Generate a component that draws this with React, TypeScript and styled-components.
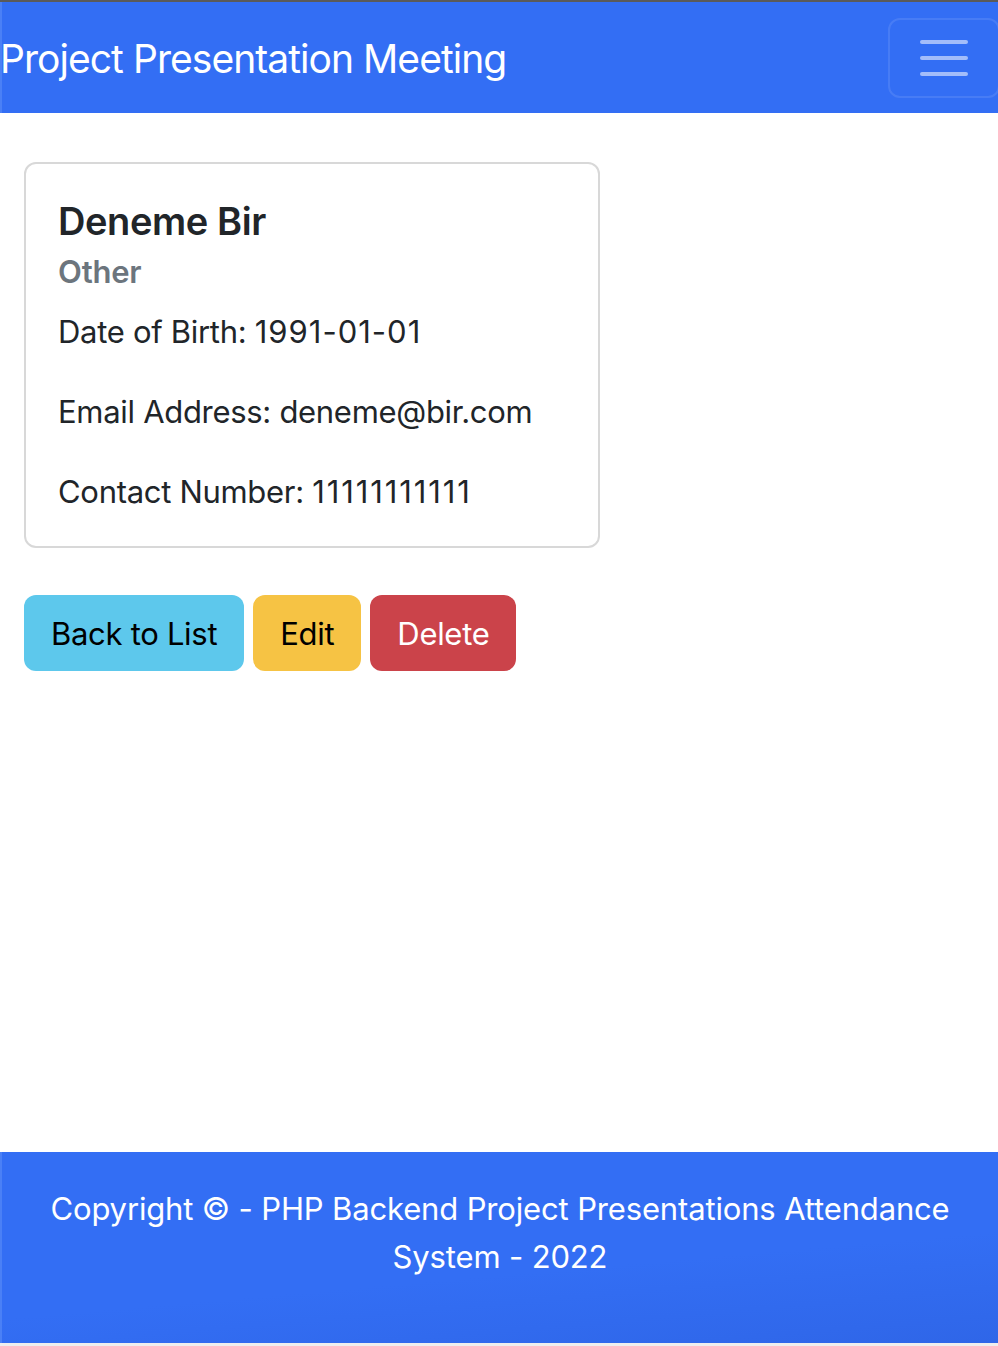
import React from 'react'
import styled, { createGlobalStyle } from 'styled-components'

const GlobalStyle = createGlobalStyle`
  html, body {
    margin: 0;
    padding: 0;
    background: #eeeeee;
  }
  body {
    font-family: Inter, "Noto Sans", "Liberation Sans", sans-serif;
    color: #212529;
  }
  * {
    box-sizing: border-box;
  }
`

const Shell = styled.div`
  display: flex;
  flex-direction: column;
  min-height: 1343px;
  background: #ffffff;
  border-top: 2px solid #5a5a5a;
`

const Navbar = styled.nav`
  display: flex;
  align-items: center;
  justify-content: space-between;
  height: 111px;
  background: #336ef4;
  border-left: 2px solid #4a80f6;
`

const Brand = styled.a`
  font-size: 39px;
  line-height: 56px;
  padding-top: 3px;
  color: #ffffff;
  text-decoration: none;
  margin-left: -2px;
  letter-spacing: -0.95px;
`

const Toggler = styled.button`
  display: flex;
  flex-direction: column;
  justify-content: center;
  align-items: center;
  gap: 12px;
  width: 112px;
  height: 80px;
  margin-right: -2px;
  background: transparent;
  border: 2px solid rgba(255, 255, 255, 0.1);
  border-radius: 12px;
  padding: 0;
`

const TogglerBar = styled.span`
  display: block;
  width: 48px;
  height: 4px;
  border-radius: 2px;
  background: rgba(255, 255, 255, 0.55);
`

const Main = styled.main`
  flex: 1;
  padding: 49px 24px;
`

const Card = styled.div`
  width: 576px;
  border: 2px solid #d8d8d8;
  border-radius: 12px;
  padding: 32px 32px 30px;
`

const Title = styled.h5`
  margin: 1px 0 8px;
  font-size: 38px;
  font-weight: 600;
  line-height: 48px;
  letter-spacing: -0.4px;
  color: #212529;
`

const Subtitle = styled.h6`
  margin: 0 0 17px;
  font-size: 31px;
  font-weight: 600;
  line-height: 38px;
  color: #6c757d;
  letter-spacing: -0.2px;
`

const Field = styled.p`
  margin: 0 0 32px;
  font-size: 31px;
  line-height: 48px;
  letter-spacing: -0.3px;
  &:last-child {
    margin-bottom: 0;
  }
`

const Value = styled.span<{ spread: number }>`
  letter-spacing: ${({ spread }) => spread}px;
`

const Actions = styled.div`
  display: flex;
  gap: 9px;
  margin-top: 47px;
`

const tones = {
  info: { bg: '#5dc8ec', fg: '#000000' },
  warning: { bg: '#f6c344', fg: '#000000' },
  danger: { bg: '#cb434a', fg: '#ffffff' },
}

const Button = styled.a<{ tone: keyof typeof tones }>`
  display: inline-flex;
  align-items: center;
  height: 76px;
  padding: 0 27px;
  border-radius: 12px;
  font-size: 31px;
  letter-spacing: -0.3px;
  text-decoration: none;
  background: ${({ tone }) => tones[tone].bg};
  color: ${({ tone }) => tones[tone].fg};
`

const Footer = styled.footer`
  padding: 33px 40px 62px;
  text-align: center;
  background: linear-gradient(175deg, #336ef4 60%, #2f66e8 100%);
  border-left: 2px solid #4a80f6;
`

const FooterText = styled.p`
  margin: 0;
  font-size: 31px;
  line-height: 48px;
  letter-spacing: -0.15px;
  color: #ffffff;
`

const App: React.FC = () => {
  return (
    <>
      <GlobalStyle />
      <Shell>
        <Navbar>
          <Brand href="#">Project Presentation Meeting</Brand>
          <Toggler aria-label="Toggle navigation">
            <TogglerBar />
            <TogglerBar />
            <TogglerBar />
          </Toggler>
        </Navbar>
        <Main>
          <Card>
            <Title>Deneme Bir</Title>
            <Subtitle>Other</Subtitle>
            <Field>Date of Birth: <Value spread={1}>1991-01-01</Value></Field>
            <Field>Email Address: deneme@bir.com</Field>
            <Field>Contact Number: <Value spread={1.9}>11111111111</Value></Field>
          </Card>
          <Actions>
            <Button tone="info" href="#">Back to List</Button>
            <Button tone="warning" href="#">Edit</Button>
            <Button tone="danger" href="#">Delete</Button>
          </Actions>
        </Main>
        <Footer>
          <FooterText>Copyright © - PHP Backend Project Presentations Attendance System - 2022</FooterText>
        </Footer>
      </Shell>
    </>
  )
}

export default App
